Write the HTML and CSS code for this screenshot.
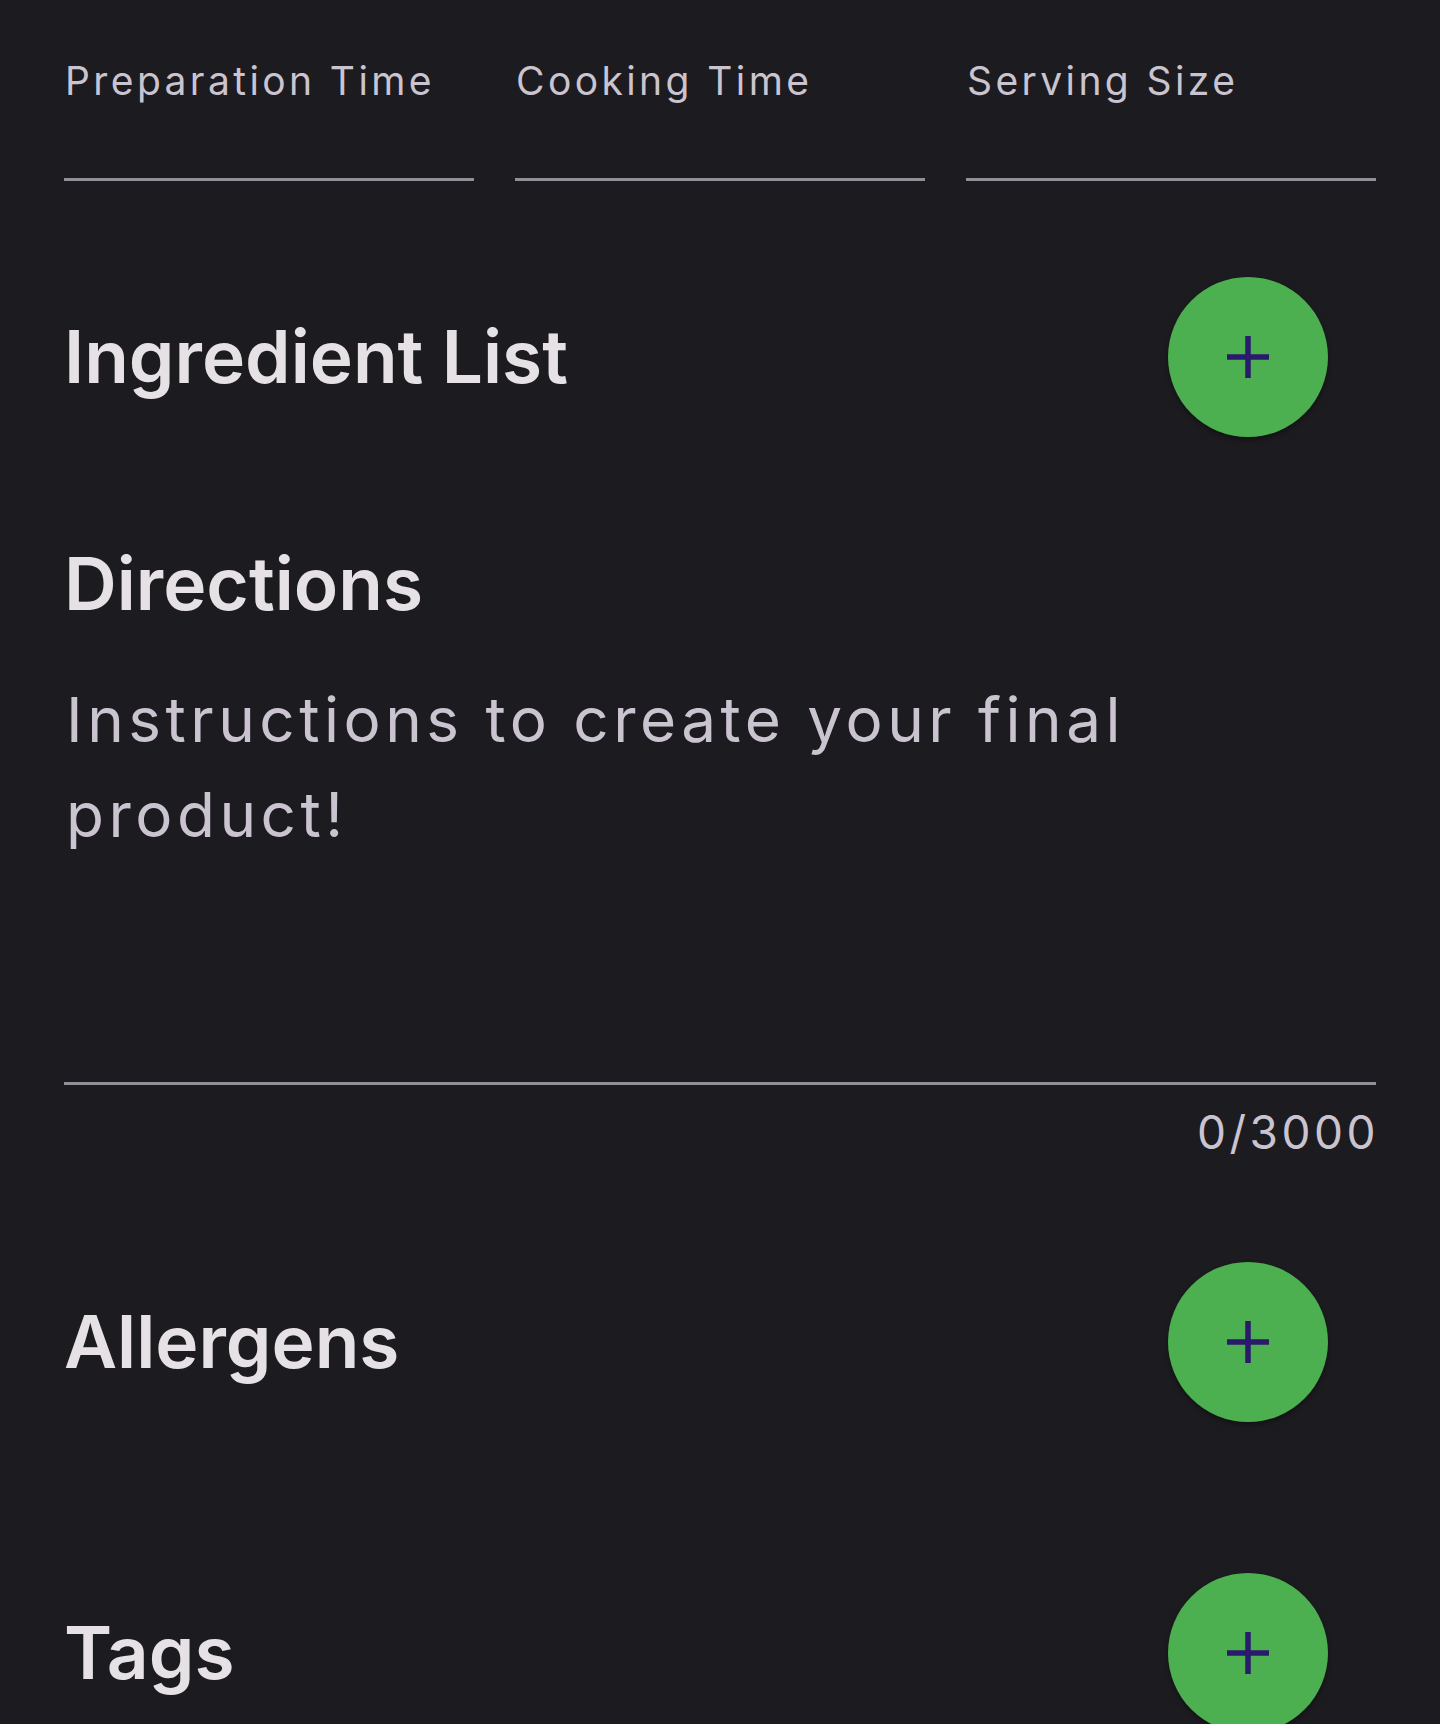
FILE: index.html
```html
<!DOCTYPE html>
<html lang="en">
<head>
<meta charset="utf-8">
<title>New Recipe</title>
<link rel="stylesheet" href="styles.css">
</head>
<body>
<main class="form">
  <div class="time-row">
    <div class="field"><span class="field-label">Preparation Time</span></div>
    <div class="field"><span class="field-label">Cooking Time</span></div>
    <div class="field"><span class="field-label">Serving Size</span></div>
  </div>

  <section class="section-row section-row--ingredients">
    <h2 class="section-title">Ingredient List</h2>
    <button class="fab" type="button" aria-label="Add ingredient">
      <svg class="fab-icon" viewBox="0 0 42 42" aria-hidden="true"><path d="M21 0v42M0 21h42"/></svg>
    </button>
  </section>

  <section class="directions">
    <h2 class="section-title section-title--directions">Directions</h2>
    <div class="textarea">
      <p class="placeholder">Instructions to create your final<br>product!</p>
    </div>
    <div class="counter">0/3000</div>
  </section>

  <section class="section-row section-row--allergens">
    <h2 class="section-title">Allergens</h2>
    <button class="fab" type="button" aria-label="Add allergen">
      <svg class="fab-icon" viewBox="0 0 42 42" aria-hidden="true"><path d="M21 0v42M0 21h42"/></svg>
    </button>
  </section>

  <section class="section-row section-row--tags">
    <h2 class="section-title">Tags</h2>
    <button class="fab" type="button" aria-label="Add tag">
      <svg class="fab-icon" viewBox="0 0 42 42" aria-hidden="true"><path d="M21 0v42M0 21h42"/></svg>
    </button>
  </section>
</main>
</body>
</html>
```

FILE: styles.css
```css
html {
  background: #1c1b1f;
}

body {
  margin: 0;
  background: #1c1b1f;
  font-family: "Inter", "Noto Sans", sans-serif;
  color: #e6e1e5;
  overflow: hidden;
}

.form {
  padding: 0 64px;
}

.time-row {
  display: grid;
  grid-template-columns: repeat(3, 1fr);
  column-gap: 41px;
}

.field {
  padding: 57px 0 73px 1px;
  border-bottom: 3px solid #938f99;
}

.field-label {
  display: block;
  font-size: 39px;
  line-height: 48px;
  font-weight: 400;
  letter-spacing: 3.4px;
  color: #cac4d0;
  white-space: nowrap;
}

.section-row {
  display: flex;
  align-items: center;
  justify-content: space-between;
  height: 160px;
  padding-right: 48px;
}

.section-row--ingredients {
  margin-top: 96px;
}

.section-row--allergens {
  margin-top: 102px;
}

.section-row--tags {
  margin-top: 151px;
}

.section-title {
  margin: 0;
  font-size: 73px;
  line-height: 88px;
  font-weight: 600;
  letter-spacing: 0;
  color: #e6e1e5;
}

.section-title--directions {
  margin-top: 103px;
}

.fab {
  width: 160px;
  height: 160px;
  border: 0;
  border-radius: 50%;
  padding: 0;
  background: #4caf50;
  display: flex;
  align-items: center;
  justify-content: center;
  box-shadow: 0 3px 5px rgba(0, 0, 0, 0.35);
  cursor: pointer;
}

.fab-icon {
  width: 42px;
  height: 42px;
  fill: none;
  stroke: #2a1a6c;
  stroke-width: 5.5;
}

.textarea {
  margin-top: 44px;
  min-height: 410px;
  border-bottom: 3px solid #938f99;
}

.placeholder {
  margin: 0;
  padding-left: 2px;
  font-size: 62px;
  line-height: 95px;
  font-weight: 400;
  letter-spacing: 4.5px;
  color: #cac4d0;
}

.counter {
  margin-top: 19px;
  margin-right: -3px;
  font-size: 46px;
  line-height: 56px;
  text-align: right;
  letter-spacing: 3.5px;
  color: #cac4d0;
}
```
